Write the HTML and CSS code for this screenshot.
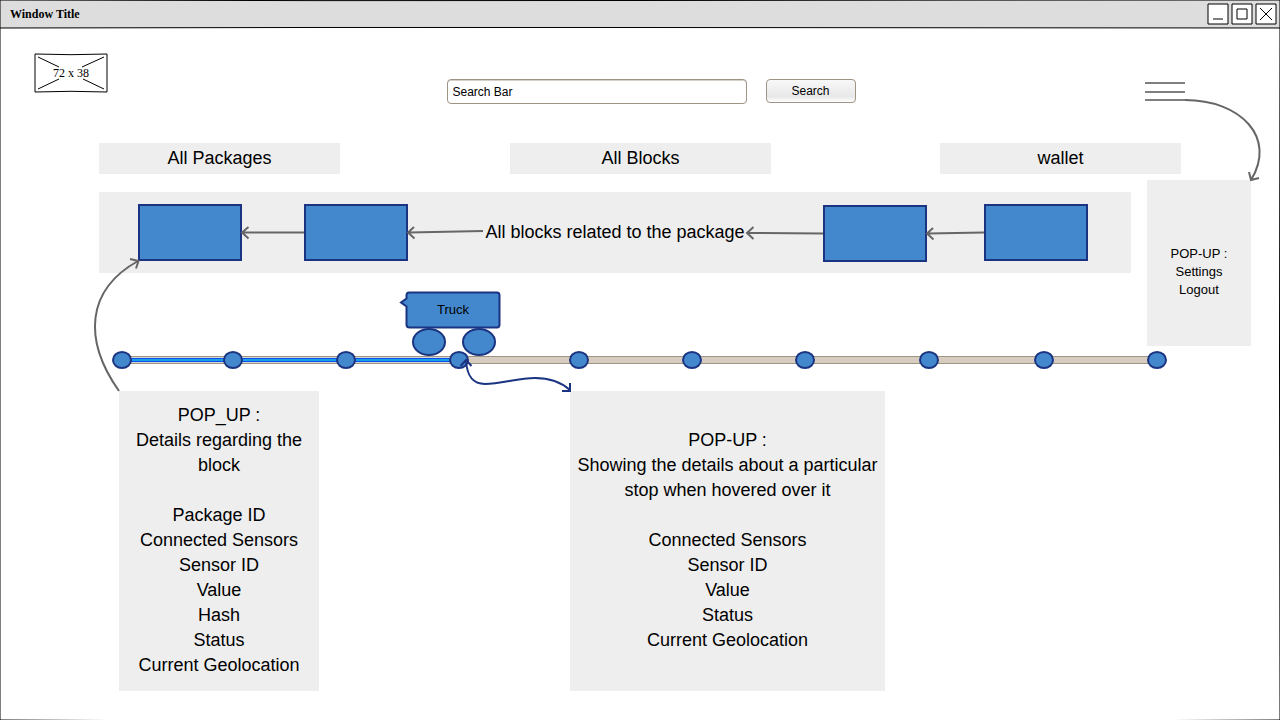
FILE: index.html
```html
<!DOCTYPE html>
<html lang="en">
<head>
<meta charset="utf-8">
<title>Window Title</title>
<link rel="stylesheet" href="styles.css">
</head>
<body>
<div class="window">
  <header class="titlebar">
    <h1 class="title">Window Title</h1>
    <div class="controls">
      <svg class="control" viewBox="0 0 22 22"><path class="frame" d="M1 1H21V21H1Z"/><path class="mark" d="M6 16H16"/></svg>
      <svg class="control" viewBox="0 0 22 22"><path class="frame" d="M1 1H21V21H1Z"/><path class="mark" d="M6 6H16V16H6Z"/></svg>
      <svg class="control" viewBox="0 0 22 22"><path class="frame" d="M1 1H21V21H1Z"/><path class="cross" d="M5 5L17 17M17 5L5 17"/></svg>
    </div>
  </header>

  <div class="toolbar">
    <div class="logo">
      <svg class="logo-frame" viewBox="0 0 74 40"><path class="frame" d="M1 1Q37 2.4 73 1V39Q37 37.6 1 39Z"/><path class="rays" d="M4 4L25 14M70 4L48 14M4 36L25 26M70 36L49 26"/></svg>
      <span class="logo-size">72 x 38</span>
    </div>
    <input class="search-input" type="text" value="Search Bar" aria-label="Search">
    <button class="search-button" type="button">Search</button>
    <div class="menu"><span class="menu-line"></span><span class="menu-line"></span><span class="menu-line"></span></div>
  </div>

  <nav class="nav">
    <div class="nav-item">All Packages</div>
    <div class="nav-item nav-item-wide">All Blocks</div>
    <div class="nav-item">wallet</div>
  </nav>

  <div class="stage">
    <div class="main">
      <div class="chain">
        <div class="block block-first"></div>
        <div class="block block-second"></div>
        <div class="chain-label">All blocks related to the package</div>
        <div class="block block-third"></div>
        <div class="block block-fourth"></div>
      </div>
      <div class="truck">
        <div class="truck-body">Truck</div>
        <svg class="truck-shape" viewBox="400 291 101 66">
          <path d="M409 292.500H497Q499.500 292.500 499.500 295.500V324.500Q499.500 327.500 497 327.500H409.500Q406.500 327.500 406.500 324.500V306.500L401 302.500L406.500 298.500V295.500Q406.500 292.500 409 292.500Z"/>
          <ellipse cx="429" cy="342" rx="16" ry="13"/>
          <ellipse cx="479" cy="342" rx="16" ry="13"/>
        </svg>
      </div>
    </div>
    <aside class="note note-menu">&nbsp;<br>POP-UP :<br>Settings<br>Logout</aside>
  </div>

  <svg class="track" viewBox="99 350 1082 20">
    <path class="rail" d="M122 356.500H1157V363.500H122Z"/>
    <path class="done-pale" d="M122 360H459"/>
    <path class="done-edge" d="M122 360H459"/>
    <path class="done-core" d="M122 360H459"/>
    <g class="stops">
      <ellipse cx="122" cy="360" rx="9" ry="8"/><ellipse cx="233" cy="360" rx="9" ry="8"/><ellipse cx="346" cy="360" rx="9" ry="8"/><ellipse cx="459" cy="360" rx="9" ry="8"/><ellipse cx="579" cy="360" rx="9" ry="8"/><ellipse cx="692" cy="360" rx="9" ry="8"/><ellipse cx="805" cy="360" rx="9" ry="8"/><ellipse cx="929" cy="360" rx="9" ry="8"/><ellipse cx="1044" cy="360" rx="9" ry="8"/><ellipse cx="1157" cy="360" rx="9" ry="8"/>
    </g>
  </svg>

  <div class="details">
    <section class="note note-block">POP_UP :<br>Details regarding the<br>block<br><br>Package ID<br>Connected Sensors<br>Sensor ID<br>Value<br>Hash<br>Status<br>Current Geolocation</section>
    <section class="note note-stop">POP-UP :<br>Showing the details about a particular<br>stop when hovered over it<br><br>Connected Sensors<br>Sensor ID<br>Value<br>Status<br>Current Geolocation</section>
  </div>

  <svg class="connectors" viewBox="0 0 1280 720">
    <g class="outline">
      <path d="M0 0Q320 1 640 .5T1280 0"/>
      <path d="M0 28Q320 27.200 640 27.500T1280 28"/>
      <path d="M0 0V720"/>
      <path d="M1280 0Q1279 360 1280 720"/>
      <path d="M0 720Q640 724 1280 720"/>
    </g>
    <g class="link">
      <path d="M304 232.500H243M248.500 227L242 232.500L248.500 238.500"/>
      <path d="M483 231L409 232.500M414 227L408 232.500L414.500 238.500"/>
      <path d="M823 233.500L748 233M753.500 227L747 233L753.500 239"/>
      <path d="M984 232.500L928 233.500M933 228L927 233.500L933.500 239.500"/>
      <path d="M119 391C83 340 86 290 138 261M130 259L138.500 261L136 268.500"/>
      <path d="M1185 100C1241 100 1277 138 1251 180M1249 172L1251 180L1259 178"/>
    </g>
    <path class="stop-link" d="M466 360C467 378 474 384 485 384C501 384 518 378 535 378C551 378 562 383 570 390M460.500 366L466 360L471.500 366M562 391H570V383"/>
  </svg>
</div>
</body>
</html>
```

FILE: styles.css
```css
* { box-sizing: border-box; }
body { margin: 0; }
svg { display: block; fill: none; overflow: visible; }

.window {
  position: relative;
  width: 1280px;
  height: 720px;
  overflow: hidden;
  background: #fff;
  color: #000;
  font-family: "Liberation Sans", Arial, sans-serif;
  font-size: 18px;
  line-height: 25px;
}

.titlebar {
  display: flex;
  justify-content: space-between;
  height: 28px;
  padding: 3px 3px 0 10px;
  background: #ddd;
}
.title {
  margin: 0;
  font: bold 12px/22px "Liberation Serif", "Times New Roman", serif;
}
.controls { display: flex; gap: 2px; }
.control { width: 22px; height: 22px; }
.frame { fill: #fff; stroke: #000; stroke-width: 1; }
.mark { stroke: #000; stroke-width: 1; }
.cross { stroke: #000; stroke-width: 1; }

.toolbar {
  display: flex;
  align-items: flex-start;
  height: 115px;
  padding: 25px 95px 0 34px;
}
.logo {
  display: grid;
  place-items: center;
  width: 74px;
  height: 40px;
}
.logo-frame, .logo-size { grid-area: 1 / 1; }
.logo-frame { width: 74px; height: 40px; }
.logo-size { font: 12px/14px "Liberation Serif", "Times New Roman", serif; }
.rays { stroke: #000; stroke-width: 1; }

.search-input, .search-button {
  border: 1px solid #9f9384;
  border-radius: 4px;
  font: 12px "Liberation Sans", Arial, sans-serif;
  color: #000;
}
.search-input {
  width: 300px;
  height: 25px;
  margin: 26px 0 0 339px;
  padding: 0 4.5px;
  box-shadow: inset 0 1px 0 #d5d0ca;
}
.search-button {
  width: 90px;
  height: 24px;
  margin: 26px 0 0 19px;
  padding: 0 1px 0 0;
  background: linear-gradient(#f8f8f8, #e8e8e8 75%, #fff);
}
.menu {
  display: flex;
  flex-direction: column;
  gap: 7px;
  width: 40px;
  margin: 29px 0 0 auto;
}
.menu-line { height: 2px; background: #7f7f7f; }
.menu-line:last-child { margin-top: -1px; }

.nav {
  display: flex;
  justify-content: space-between;
  height: 31px;
  margin: 0 99px;
}
.nav-item {
  width: 241px;
  background: #eee;
  line-height: 31px;
  text-align: center;
}
.nav-item-wide { width: 261px; margin-left: 1px; }

.stage {
  display: flex;
  gap: 16px;
  height: 170px;
  margin: 6px 29px 0 99px;
}
.main { width: 1032px; padding-top: 12px; }
.chain {
  display: flex;
  height: 81px;
  padding: 12px 43px 0 39px;
  background: #eee;
}
.block {
  width: 104px;
  height: 57px;
  border: 2px solid #1a3481;
  background: #4387cc;
}
.block-second { margin-left: 62px; }
.block-third { margin-top: 1px; }
.block-fourth { margin-left: 57px; }
.chain-label {
  flex: 1;
  padding: 16px 1px 0 0;
  text-align: center;
  white-space: nowrap;
}
.truck {
  display: grid;
  width: 101px;
  margin: 18px 0 0 301px;
}
.truck-shape, .truck-body { grid-area: 1 / 1; }
.truck-shape {
  width: 101px;
  height: 66px;
  fill: #4387cc;
  stroke: #1a3481;
  stroke-width: 2;
}
.truck-body {
  z-index: 1;
  padding-left: 5px;
  font-size: 13px;
  line-height: 37px;
  text-align: center;
}

.note { background: #eee; text-align: center; }
.note-menu {
  width: 104px;
  height: 166px;
  padding-top: 47px;
  font-size: 13px;
  line-height: 18px;
}

.track { width: 1082px; height: 20px; margin-left: 99px; }
.rail { fill: #d6cdc0; stroke: #9f9384; }
.done-pale { stroke: #d6d6d6; stroke-width: 6; }
.done-edge { stroke: #0a50e8; stroke-width: 4; }
.done-core { stroke: #16a0e8; stroke-width: 2; }
.stops { fill: #4387cc; stroke: #1a3481; stroke-width: 2; }

.details {
  display: flex;
  align-items: flex-start;
  gap: 251px;
  margin: 21px 0 0 119px;
}
.note-block { width: 200px; height: 300px; padding-top: 12px; }
.note-stop { width: 315px; height: 300px; padding-top: 37px; }

/* Arrows run across the panels, so they sit in a layer above them */
.connectors {
  position: absolute;
  inset: 0;
  width: 1280px;
  height: 720px;
  pointer-events: none;
}
.outline { stroke: #000; stroke-width: 1; }
.link { stroke: #666; stroke-width: 2; }
.stop-link { stroke: #1a3481; stroke-width: 2; }
```
